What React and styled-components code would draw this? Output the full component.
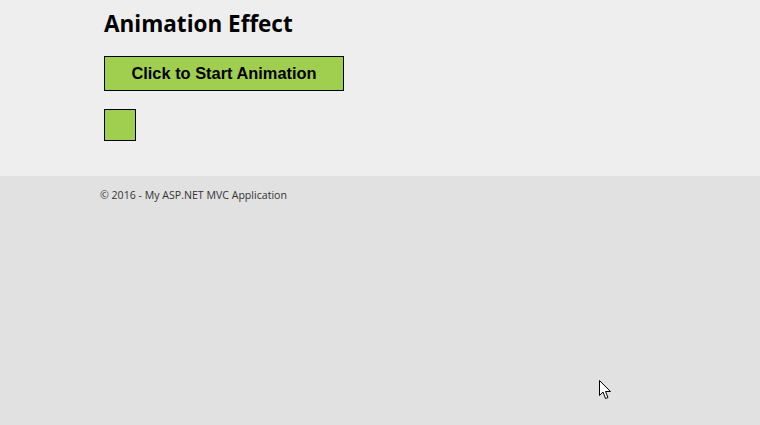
import styled, { createGlobalStyle } from 'styled-components'

const Global = createGlobalStyle`
  html, body {
    margin: 0;
    padding: 0;
    height: 100%;
    background: #e1e1e1;
  }
  #root {
    min-height: 425px;
  }
`

const Page = styled.div`
  position: relative;
  min-height: 425px;
  background: #e1e1e1;
`

const Body = styled.div`
  background: #eeeeee;
  height: 176px;
  box-sizing: border-box;
  padding: 9px 0 0 104px;
`

const Title = styled.h2`
  margin: 0 0 17px;
  font-family: "Open Sans", "Liberation Sans", sans-serif;
  font-weight: 700;
  font-size: 22.5px;
  line-height: 30px;
  color: #000;
`

const StartButton = styled.button`
  display: block;
  width: 240px;
  height: 35px;
  padding: 0;
  border: 1px solid #000;
  background: #a0cf4f;
  font-family: "Liberation Sans", Arial, sans-serif;
  font-weight: 700;
  font-size: 16.4px;
  color: #000;
  cursor: pointer;
`

const Box = styled.div`
  margin-top: 18px;
  width: 30px;
  height: 30px;
  border: 1px solid #000;
  background: #a0cf4f;
`

const Footer = styled.footer`
  padding: 12px 0 0 100px;
  font-family: "Open Sans", "Liberation Sans", sans-serif;
  font-size: 10.6px;
  color: #333;
`

const Cursor = styled.svg`
  position: absolute;
  left: 599px;
  top: 380px;
`

export default function App() {
  return (
    <Page>
      <Global />
      <Body>
        <Title>Animation Effect</Title>
        <StartButton>Click to Start Animation</StartButton>
        <Box />
      </Body>
      <Footer>© 2016 - My ASP.NET MVC Application</Footer>
      <Cursor width="13" height="20" viewBox="0 0 13 20">
        <path d="M0.5 0.5 L0.5 15.5 L4 12 L6.5 18.5 L9 17.5 L6.5 11.5 L11.5 11.5 Z" fill="#fff" stroke="#000" strokeWidth="1" />
      </Cursor>
    </Page>
  )
}
